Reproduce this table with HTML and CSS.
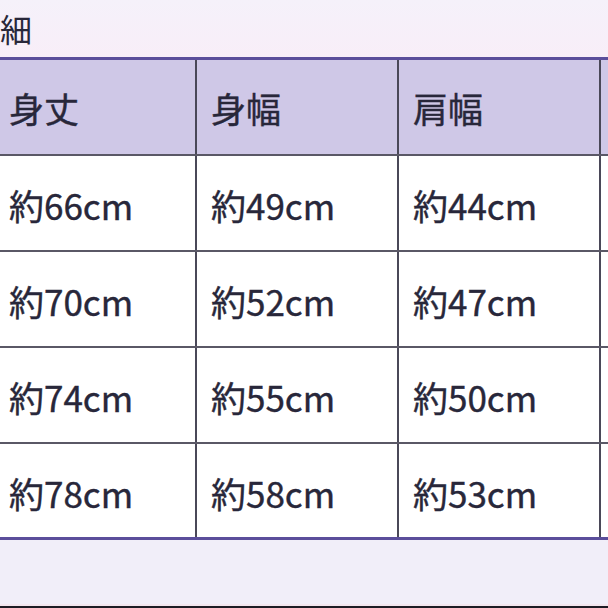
FILE: index.html
```html
<!DOCTYPE html>
<html lang="ja">
<head>
<meta charset="utf-8">
<link rel="stylesheet" href="styles.css">
</head>
<body>
<div class="page">
  <div class="top">
    <h2 class="title">細</h2>
  </div>
  <table class="size-table">
    <thead>
      <tr><th>身丈</th><th>身幅</th><th>肩幅</th><th></th></tr>
    </thead>
    <tbody>
      <tr><td>約66cm</td><td>約49cm</td><td>約44cm</td><td></td></tr>
      <tr><td>約70cm</td><td>約52cm</td><td>約47cm</td><td></td></tr>
      <tr><td>約74cm</td><td>約55cm</td><td>約50cm</td><td></td></tr>
      <tr><td>約78cm</td><td>約58cm</td><td>約53cm</td><td></td></tr>
    </tbody>
  </table>
  <div class="bottom"></div>
  <div class="edge"></div>
</div>
</body>
</html>
```

FILE: styles.css
```css
html, body {
  margin: 0;
  padding: 0;
  width: 608px;
  height: 608px;
  overflow: hidden;
}
body {
  font-family: "Noto Sans CJK JP", "Noto Sans", sans-serif;
  color: #28273a;
  background: #f1eef9;
}
.page {
  display: flex;
  flex-direction: column;
  height: 608px;
}
.top {
  height: 57px;
  background: linear-gradient(180deg, #f5f1fa 0%, #f8eef8 100%);
  display: flex;
  align-items: flex-start;
}
.title {
  margin: 6px 0 0 0;
  font-size: 32px;
  font-weight: 400;
  line-height: 44px;
  color: #28273a;
}
.size-table {
  border-collapse: collapse;
  margin-left: -7px;
  width: 808px;
  table-layout: fixed;
  background: #ffffff;
  border-top: 3px solid #5b4e9b;
  border-bottom: 3px solid #5b4e9b;
}
.size-table th,
.size-table td {
  width: 202px;
  padding: 0 0 0 14px;
  text-align: left;
  vertical-align: middle;
  font-size: 35px;
  font-weight: 400;
  line-height: 1;
  border-left: 2px solid #4a4858;
  border-right: 2px solid #4a4858;
  box-sizing: border-box;
  -webkit-text-stroke: 0.4px #28273a;
}
.size-table th {
  height: 96px;
  background: #cfc8e7;
  border-bottom: 2px solid #5a5866;
  padding-top: 2px;
}
.size-table td {
  height: 96px;
  border-bottom: 2px solid #5a5866;
  padding-top: 4px;
}
.size-table tbody tr:last-child td {
  border-bottom: 3px solid #5b4e9b;
}
.bottom {
  flex: 1;
  background: #f1eef9;
  border-bottom: 2px solid #f3e6ef;
}
.edge {
  height: 2px;
  background: #1d1b24;
}
```
